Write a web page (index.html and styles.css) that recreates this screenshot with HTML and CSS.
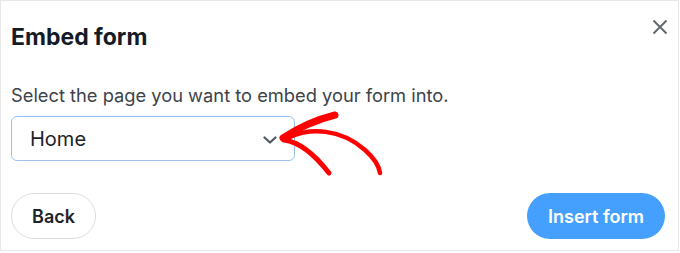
FILE: index.html
```html
<!DOCTYPE html>
<html>
<head>
<meta charset="utf-8">
<link rel="stylesheet" href="styles.css">
</head>
<body>
<div class="modal">
  <div class="header">
    <h2 class="title">Embed form</h2>
    <button class="close" aria-label="Close">
      <svg width="16" height="16" viewBox="0 0 16 16"><path d="M1.5 1.5 L14.5 14.5 M14.5 1.5 L1.5 14.5" stroke="#646970" stroke-width="2" fill="none"/></svg>
    </button>
  </div>
  <p class="label">Select the page you want to embed your form into.</p>
  <div class="select">
    <span class="select-value">Home</span>
    <svg class="chevron" width="14" height="8" viewBox="0 0 14 8"><path d="M1.5 1.5 L7 6.5 L12.5 1.5" stroke="#50575e" stroke-width="2.2" fill="none" stroke-linecap="round" stroke-linejoin="round"/></svg>
  </div>
  <div class="footer">
    <button class="btn btn-back">Back</button>
    <button class="btn btn-insert">Insert form</button>
  </div>
  <svg class="arrow" width="120" height="80" viewBox="0 0 120 80">
    <path d="M13 38 C 25 30, 45 20, 65 15" stroke="#f00" stroke-width="7" fill="none" stroke-linecap="round"/>
    <path d="M14 40 C 30 42, 45 55, 59 73" stroke="#f00" stroke-width="5" fill="none" stroke-linecap="round"/>
    <path d="M20 37 C 40 28, 70 28, 95 50 C 104 58, 109 66, 110 73" stroke="#f00" stroke-width="4.5" fill="none" stroke-linecap="round"/>
  </svg>
</div>
</body>
</html>
```
FILE: styles.css
```css
html, body {
  margin: 0;
  padding: 0;
  background: #ffffff;
}
body {
  font-family: Inter, "Noto Sans", sans-serif;
}
.modal {
  position: relative;
  width: 679px;
  height: 251px;
  box-sizing: border-box;
  border: 1px solid #e8e8e8;
  padding: 18px 10px 0 10px;
  display: flex;
  flex-direction: column;
}
.header {
  display: flex;
  justify-content: space-between;
  align-items: flex-start;
}
.title {
  margin: 4px 0 0 0;
  font-size: 23px;
  font-weight: 700;
  color: #151b26;
  line-height: 29px;
}
.close {
  border: 0;
  background: none;
  padding: 0;
  margin: 0;
  width: 16px;
  height: 16px;
  display: block;
}
.close svg { display: block; }
.label {
  margin: 32px 0 0 0;
  font-size: 18.3px;
  line-height: 22px;
  color: #3c434a;
}
.select {
  margin-top: 10px;
  width: 284px;
  height: 45px;
  box-sizing: border-box;
  border: 1px solid #9ec2f0;
  border-radius: 6px;
  display: flex;
  align-items: center;
  justify-content: space-between;
  padding: 0 17px 0 18px;
}
.select-value {
  font-size: 20px;
  color: #1d2327;
}
.chevron { display: block; margin-top: 2px; }
.arrow {
  position: absolute;
  left: 269px;
  top: 99px;
  display: block;
}
.footer {
  display: flex;
  justify-content: space-between;
  margin-top: 32px;
  padding-right: 3px;
}
.btn {
  height: 46px;
  border-radius: 23px;
  font-family: Inter, "Noto Sans", sans-serif;
  font-size: 18px;
  font-weight: 600;
  box-sizing: border-box;
  cursor: pointer;
  padding: 0;
}
.btn-back {
  width: 85px;
  background: #fff;
  border: 1px solid #dcdcde;
  color: #1d2327;
}
.btn-insert {
  width: 138px;
  background: #459ffd;
  border: 0;
  color: #fff;
}
```
